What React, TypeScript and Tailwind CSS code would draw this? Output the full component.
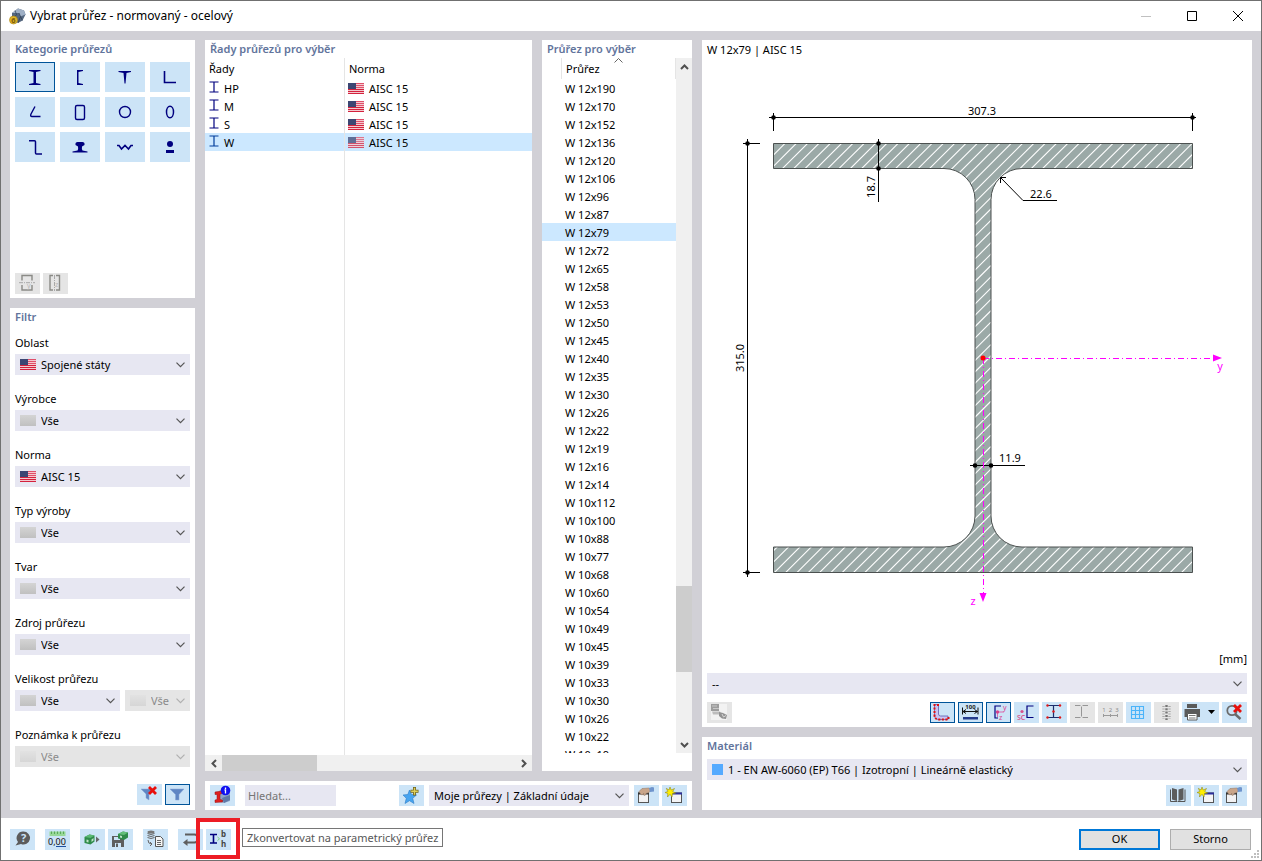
import { useState } from "react";
import type { ReactNode } from "react";
import clsx from "clsx";

const NAVY = "#00007f";

const SERIES = ["HP", "M", "S", "W"];

const SECTIONS = [
  "W 12x190", "W 12x170", "W 12x152", "W 12x136", "W 12x120", "W 12x106", "W 12x96", "W 12x87",
  "W 12x79", "W 12x72", "W 12x65", "W 12x58", "W 12x53", "W 12x50", "W 12x45", "W 12x40",
  "W 12x35", "W 12x30", "W 12x26", "W 12x22", "W 12x19", "W 12x16", "W 12x14", "W 10x112",
  "W 10x100", "W 10x88", "W 10x77", "W 10x68", "W 10x60", "W 10x54", "W 10x49", "W 10x45",
  "W 10x39", "W 10x33", "W 10x30", "W 10x26", "W 10x22", "W 10x19",
];

// Section category glyphs, drawn on a 20x20 grid
const CATEGORIES: { name: string; icon: ReactNode }[] = [
  { name: "I", icon: <path d="M4 3h11.500v1l-4.500 1v11l4.500 1v1H4v-1l4.500-1V5L4 4z" fill={NAVY} /> },
  { name: "U", icon: <path d="M7 3h6v1l-4.500 1v11l4.500 1v1H7z" fill={NAVY} /> },
  { name: "T", icon: <path d="M3.500 4h12.500v1l-4.500 1L10.500 16.500h-1L8.500 6l-5-1z" fill={NAVY} /> },
  { name: "L", icon: <path d="M4.500 4v11.500H16" fill="none" stroke={NAVY} strokeWidth="1.600" /> },
  { name: "L otevřený", icon: <path d="M10 4.500 6 12q-1 2.500 1 2.500h8.500" fill="none" stroke={NAVY} strokeWidth="1.400" /> },
  { name: "Obdélník", icon: <rect x="5.500" y="3.500" width="9" height="14" rx="1.500" fill="none" stroke={NAVY} strokeWidth="1.400" /> },
  { name: "Trubka", icon: <circle cx="10" cy="10" r="5.500" fill="none" stroke={NAVY} strokeWidth="1.400" /> },
  { name: "Elipsa", icon: <ellipse cx="10" cy="10" rx="3.500" ry="5.700" fill="none" stroke={NAVY} strokeWidth="1.500" /> },
  { name: "Z", icon: <path d="M4 3.700h5.500q1 0 1 1V16q0 1 1 1H17" fill="none" stroke={NAVY} strokeWidth="1.500" /> },
  { name: "Kolejnice", icon: <path d="M5.500 6.500q0-1.500 2-1.500h5q2 0 2 1.500v1.500l-2.500 1.500q-.5 3 .5 4l5 1v1H2.500v-1l5-1q1-1 .5-4L5.500 8z" fill={NAVY} /> },
  { name: "Trapéz", icon: <path d="M2 8.500h2l2.500 3.500 3.500-3.500 3.500 3.500L16 8.500h2" fill="none" stroke={NAVY} strokeWidth="1.600" /> },
  { name: "Ostatní", icon: <g fill={NAVY}><circle cx="10" cy="7" r="3" /><rect x="6" y="13" width="8" height="3" /></g> },
];

// 45° hatch lines, each one given by the constant x + y
const HATCH = Array.from({ length: 75 }, (_, i) => 917.1 + i * 11.31);

function Flag({ faded }: { faded?: boolean }) {
  return (
    <svg width="16" height="11" viewBox="0 0 16 11" shapeRendering="crispEdges" className={clsx("shrink-0", faded && "opacity-75")} aria-hidden>
      <rect width="16" height="11" fill="#f3c9cf" />
      {[0, 2, 4, 6, 8, 10].map((y) => (
        <rect key={y} y={y} width="16" height="1" fill={y > 5 ? "#d4213d" : "#e0506a"} />
      ))}
      <rect width="8" height="6" fill="#3c4673" />
    </svg>
  );
}

function Blank({ disabled }: { disabled?: boolean }) {
  return (
    <span
      className={clsx(
        "block h-[11px] w-4 bg-linear-to-b",
        disabled ? "from-[#e2e2e2] to-[#d6d6d6]" : "from-[#d4d4d4] to-[#c0c0c0]"
      )}
    />
  );
}

function Chevron({ light }: { light?: boolean }) {
  return (
    <svg width="9" height="6" viewBox="0 0 9 6" aria-hidden>
      <path d="M.5.700 4.500 4.700 8.500.700" fill="none" stroke={light ? "#b0b0b0" : "#555"} strokeWidth="1.200" />
    </svg>
  );
}

function Combo({ label, id, value, icon, disabled, className }: {
  label?: string;
  id: string;
  value: string;
  icon?: ReactNode;
  disabled?: boolean;
  className?: string;
}) {
  return (
    <div className={clsx("relative min-w-0", className)}>
      <select
        id={id}
        aria-label={label}
        disabled={disabled}
        className={clsx(
          "block h-[21px] w-full appearance-none pt-[2px] pr-4 outline-none",
          icon ? "pl-[26px]" : "pl-[5px]",
          disabled ? "bg-[#e5e5e5] text-[#8a8a8a] opacity-100" : "bg-[#e7e7f2] text-black"
        )}
      >
        <option>{value}</option>
      </select>
      {icon && <span className="pointer-events-none absolute top-[5px] left-[5px]">{icon}</span>}
      <span className="pointer-events-none absolute top-2 right-[5px]">
        <Chevron light={disabled} />
      </span>
    </div>
  );
}

function Field({ label, htmlFor, children }: { label: string; htmlFor: string; children: ReactNode }) {
  return (
    <div className="flex flex-col gap-[3px]">
      <label htmlFor={htmlFor} className="h-4 leading-4">{label}</label>
      {children}
    </div>
  );
}

// Tool icons share a 25x21 grid, the same size as the button
function Tool({ title, active, disabled, children }: {
  title: string;
  active?: boolean;
  disabled?: boolean;
  children: ReactNode;
}) {
  return (
    <button
      type="button"
      aria-label={title}
      disabled={disabled}
      className={clsx(
        "h-[21px] w-[25px] shrink-0",
        disabled ? "bg-[#e5e5e5]" : "bg-[#cce4f7]",
        active && "ring-1 ring-[#005499] ring-inset"
      )}
    >
      <svg width="25" height="21" viewBox="0 0 25 21" fill="none" className="block">{children}</svg>
    </button>
  );
}

function Panel({ title, className, children }: { title: string; className?: string; children: ReactNode }) {
  return (
    <section className={clsx("flex flex-col bg-white", className)}>
      <h2 className="h-[18px] shrink-0 px-[5px] leading-[18px] font-semibold text-[#62749c]">{title}</h2>
      {children}
    </section>
  );
}

function ManageIcon() {
  return (
    <>
      <rect x="4.500" y="8" width="10" height="9.500" fill="#f2f2f4" stroke="#555" />
      <path d="M4 8.500h11" stroke="#333" strokeWidth="2" />
      <path d="M5 6.500 8 3.500l7-.5 2 1.500-2 3-3 1-1 2-1.500-.5.500-1.500-2 1.500-1.500-1z" fill="#c9a58a" stroke="#8d7260" strokeWidth=".5" />
      <path d="m15 3 3-1 2 .5v4l-4 .500z" fill="#6f94cc" />
    </>
  );
}

function NewIcon() {
  return (
    <>
      <rect x="9.500" y="8" width="10" height="9.500" fill="#f4f4f6" stroke="#555" />
      <path d="M9 8.500h11" stroke="#2b2f9c" strokeWidth="2" />
      <path d="m8 2 1.200 3 3.300-1.500-1.800 3 3 1.500-3.200.500L10 12l-2-2.700L5.500 12l.3-3.500L3 7.500l2.800-1L4.300 3.300 7 5z" fill="#ffee00" stroke="#8f8a20" strokeWidth=".6" />
    </>
  );
}

function RedCross() {
  return <path d="m12 3 7 7M19 3l-7 7" stroke="#e8100c" strokeWidth="2.800" />;
}

function Funnel({ d }: { d: string }) {
  return <path d={d} fill="#5f86c4" stroke="#88a6d6" strokeWidth=".5" />;
}

function AppIcon() {
  return (
    <svg width="17" height="17" viewBox="0 0 17 17" aria-hidden>
      <path d="m3 5 6-4.500 6 2 1.500 4-3 6L9 15 3 11z" fill="#54677f" />
      <path d="m3 5 6-4.500 6 2-5 2.500zM10 5l5-2.500 1.500 4-5 2z" fill="#9fb0c6" />
      <path d="m10 5 1.500 3.500L9 15M11.500 8.500l2 4M6 2.500l1.500 4L5 10" stroke="#2d3b50" strokeWidth=".7" fill="none" />
      <circle cx="4.500" cy="12" r="4" fill="#e0b62c" stroke="#a67f12" strokeWidth=".6" />
      <text x="4.500" y="14.800" fontSize="7.500" fontWeight="700" textAnchor="middle" fill="#7a5a08">6</text>
    </svg>
  );
}

function TitleBar() {
  const button = "flex h-full w-[46px] items-center justify-center";
  return (
    <header className="flex h-[30px] shrink-0 items-center bg-white pl-2">
      <AppIcon />
      <h1 className="ml-1 flex-1 text-[12px]">Vybrat průřez - normovaný - ocelový</h1>
      <button type="button" aria-label="Minimalizovat" className={button} disabled>
        <svg width="10" height="10"><path d="M0 5.500h10" stroke="#c0c0c0" /></svg>
      </button>
      <button type="button" aria-label="Maximalizovat" className={button}>
        <svg width="10" height="10"><path d="M.5.500h9v9h-9z" fill="none" stroke="#000" /></svg>
      </button>
      <button type="button" aria-label="Zavřít" className={button}>
        <svg width="10" height="10"><path d="m0 0 10 10M10 0 0 10" stroke="#000" /></svg>
      </button>
    </header>
  );
}

function Categories() {
  const [selected, setSelected] = useState("I");
  return (
    <Panel title="Kategorie průřezů" className="h-[258px]">
      <div className="mt-1 grid grid-cols-4 gap-[5px] px-[5px]">
        {CATEGORIES.map(({ name, icon }) => (
          <button
            key={name}
            type="button"
            aria-label={name}
            onClick={() => setSelected(name)}
            className={clsx(
              "flex h-[30px] items-center justify-center bg-[#cce4f7]",
              selected === name && "ring-1 ring-[#005499] ring-inset"
            )}
          >
            <svg width="20" height="20" viewBox="0 0 20 20">{icon}</svg>
          </button>
        ))}
      </div>
      <div className="mt-auto flex gap-[3px] px-[5px] pb-1">
        <Tool title="Zrcadlit podle y" disabled>
          <path d="M9 2.500H7v5M15 2.500h2v5M9 2.500h6M7 12v5h10v-5" stroke="#8a8a86" strokeWidth="1.400" />
          <path d="M4 9.700h16" stroke="#a8a8a8" strokeDasharray="4 1 1 1" />
          <text x="12" y="15" fontSize="7" fill="#b8b8b8">y</text>
        </Tool>
        <Tool title="Zrcadlit podle z" disabled>
          <path d="M10 2.500H7v14.500h3M13 2.500h3.500v14.500H13" stroke="#8a8a86" strokeWidth="1.400" />
          <path d="M11.500 2v16" stroke="#a8a8a8" strokeDasharray="4 1 1 1" />
          <text x="12" y="14" fontSize="7" fill="#b8b8b8">z</text>
        </Tool>
      </div>
    </Panel>
  );
}

function Filter() {
  return (
    <Panel title="Filtr" className="flex-1">
      <div className="mt-[9px] flex flex-col gap-4 px-[5px]">
        <Field label="Oblast" htmlFor="oblast"><Combo id="oblast" value="Spojené státy" icon={<Flag />} /></Field>
        <Field label="Výrobce" htmlFor="vyrobce"><Combo id="vyrobce" value="Vše" icon={<Blank />} /></Field>
        <Field label="Norma" htmlFor="norma"><Combo id="norma" value="AISC 15" icon={<Flag />} /></Field>
        <Field label="Typ výroby" htmlFor="typ"><Combo id="typ" value="Vše" icon={<Blank />} /></Field>
        <Field label="Tvar" htmlFor="tvar"><Combo id="tvar" value="Vše" icon={<Blank />} /></Field>
        <Field label="Zdroj průřezu" htmlFor="zdroj"><Combo id="zdroj" value="Vše" icon={<Blank />} /></Field>
        <Field label="Velikost průřezu" htmlFor="velikost">
          <div className="flex gap-[5px]">
            <Combo id="velikost" value="Vše" icon={<Blank />} className="flex-1" />
            <Combo id="velikost2" label="Velikost průřezu 2" value="Vše" icon={<Blank disabled />} disabled className="w-[65px]" />
          </div>
        </Field>
        <Field label="Poznámka k průřezu" htmlFor="poznamka">
          <Combo id="poznamka" value="Vše" icon={<Blank disabled />} disabled />
        </Field>
      </div>
      <div className="mt-auto flex justify-end gap-[3px] p-[5px]">
        <Tool title="Zrušit filtr">
          <Funnel d="M4 5h12l-4 5v6l-3-2v-4z" />
          <RedCross />
        </Tool>
        <Tool title="Filtr" active><Funnel d="M5 5h14l-5 5.500v5.500h-3.500v-5.500z" /></Tool>
      </div>
    </Panel>
  );
}

function SeriesTable() {
  const [selected, setSelected] = useState("W");
  return (
    <Panel title="Řady průřezů pro výběr" className="min-h-0 min-w-0 flex-1">
      <div className="min-h-0 flex-1">
        <table className="h-full w-full table-fixed border-separate border-spacing-0 text-left">
          <thead>
            <tr className="h-[21px]">
              <th className="w-[140px] border-r border-[#e5e5e5] px-1 pt-[2px] pb-0 font-normal">Řady</th>
              <th className="px-1 pt-[2px] pb-0 font-normal">Norma</th>
            </tr>
          </thead>
          <tbody>
            {SERIES.map((name) => (
              <tr
                key={name}
                onClick={() => setSelected(name)}
                className={clsx("h-[18px]", selected === name && "bg-[#cce8ff]")}
              >
                <td className="border-r border-[#e5e5e5] px-1 py-0">
                  <div className="flex h-[18px] items-center gap-[5px]">
                    <svg width="10" height="14" viewBox="0 0 10 14" className="shrink-0" aria-hidden>
                      <path d="M.5 1h9M.5 11h9M5 1v10" stroke={selected === name ? "#003c9c" : NAVY} strokeWidth="1.200" />
                    </svg>
                    <span className="pt-[2px]">{name}</span>
                  </div>
                </td>
                <td className="px-[3px] py-0">
                  <div className="flex h-[18px] items-center gap-[5px]">
                    <Flag faded={selected === name} />
                    <span className="pt-[2px]">AISC 15</span>
                  </div>
                </td>
              </tr>
            ))}
            <tr>
              <td className="border-r border-[#e5e5e5]" />
              <td />
            </tr>
          </tbody>
        </table>
      </div>
      <div className="flex h-4 shrink-0 bg-[#f0f0f0]">
        <button type="button" aria-label="Posunout vlevo" className="flex w-[17px] items-center justify-center">
          <svg width="6" height="9"><path d="M5 1 1.500 4.500 5 8" fill="none" stroke="#505050" strokeWidth="2" /></svg>
        </button>
        <div className="flex-[95] bg-[#cdcdcd]" />
        <div className="flex-[198]" />
        <button type="button" aria-label="Posunout vpravo" className="flex w-[17px] items-center justify-center">
          <svg width="6" height="9"><path d="M1 1l3.500 3.500L1 8" fill="none" stroke="#505050" strokeWidth="2" /></svg>
        </button>
      </div>
    </Panel>
  );
}

function SectionList({ selected, onSelect }: { selected: string; onSelect: (name: string) => void }) {
  return (
    <Panel title="Průřez pro výběr" className="min-h-0 w-[150px] shrink-0 pb-[18px]">
      <div className="flex min-h-0 flex-1">
        <div className="relative min-w-0 flex-1 overflow-hidden">
          <svg width="9" height="5" className="absolute top-0 left-[72px]" aria-hidden>
            <path d="M.5 4.500l4-4 4 4" fill="none" stroke="#666" />
          </svg>
          <table className="w-full table-fixed border-separate border-spacing-0 text-left">
            <thead>
              <tr className="h-[21px]">
                <th className="w-5 border-r border-[#e5e5e5] p-0" />
                <th className="border-r border-[#e5e5e5] px-1 pt-[2px] pb-0 font-normal">Průřez</th>
              </tr>
            </thead>
            <tbody>
              {SECTIONS.map((name) => (
                <tr
                  key={name}
                  onClick={() => onSelect(name)}
                  className={clsx("h-[18px] leading-[18px]", selected === name && "bg-[#cce8ff]")}
                >
                  <td className="p-0" />
                  <td className="px-[3px] py-0 whitespace-nowrap">
                    <div className="h-[18px] pt-px">{name}</div>
                  </td>
                </tr>
              ))}
            </tbody>
          </table>
        </div>
        <div className="flex w-4 shrink-0 flex-col bg-[#f0f0f0]">
          <button type="button" aria-label="Posunout nahoru" className="flex h-[17px] items-center justify-center">
            <svg width="9" height="6"><path d="M1 5l3.500-3.500L8 5" fill="none" stroke="#505050" strokeWidth="2" /></svg>
          </button>
          <div className="flex-[512]" />
          <div className="flex-[86] bg-[#cdcdcd]" />
          <div className="flex-[64]" />
          <button type="button" aria-label="Posunout dolů" className="flex h-[17px] items-center justify-center">
            <svg width="9" height="6"><path d="M1 1l3.500 3.500L8 1" fill="none" stroke="#505050" strokeWidth="2" /></svg>
          </button>
        </div>
      </div>
    </Panel>
  );
}

function SearchBar() {
  return (
    <div className="flex h-[29px] shrink-0 items-center bg-white px-[5px]">
      <Tool title="Informace o průřezu">
        <path d="m9 6 5-2 6 3v9l-6 2-4-1z" fill="#8ea4c8" />
        <path d="m12 13 8-3v5l-6 3z" fill="#5f79a8" />
        <path d="m5 7 7-1v2.500l-2 .5v5.500l2.500.5V17L5 17.500V15l2-.5V9.500L5 9.500z" fill="#e02020" stroke="#901010" strokeWidth=".5" />
        <circle cx="15.500" cy="5.500" r="4.800" fill="#1010f0" />
        <path d="M15.500 2.500v1.500M14.500 5h1v3.500" stroke="#fff" strokeWidth="1.300" />
      </Tool>
      <input
        type="search"
        aria-label="Hledat"
        placeholder="Hledat..."
        className="ml-[10px] h-[21px] w-[91px] bg-[#e7e7f2] px-[3px] outline-none placeholder:text-[#757575]"
      />
      <div className="ml-auto flex">
        <Tool title="Přidat k oblíbeným">
          <path d="m10.500 5 2 4.500 5 .5-3.800 3.300L15 18.500l-4.500-2.800L6 18.500l1.300-5.200L4 10l4.800-.5z" fill="#47a4f0" stroke="#2d7cc6" strokeWidth=".6" />
          <path d="M15.500 2v8.500M11.500 6.200h8" stroke="#6e6420" strokeWidth="3" />
          <path d="M15.500 2.800v7M12.200 6.200h6.600" stroke="#dfcf58" strokeWidth="1.400" />
        </Tool>
        <Combo id="oblibene" label="Oblíbené" value="Moje průřezy | Základní údaje" className="mx-[5px] w-[200px]" />
        <div className="flex gap-[3px]">
          <Tool title="Spravovat průřezy"><ManageIcon /></Tool>
          <Tool title="Nová skupina"><NewIcon /></Tool>
        </div>
      </div>
    </div>
  );
}

function SectionDrawing() {
  const outline =
    "M773.500 143.500H1192.500V168.500H1022A31 31 0 0 0 991 199.500V516A31 31 0 0 0 1022 547H1192.500V572.500H773.500V547H944A31 31 0 0 0 975 516V199.500A31 31 0 0 0 944 168.500H773.500Z";
  return (
    <svg viewBox="702 62 550 588" className="min-h-0 w-full flex-1" fontSize="11" aria-label="Průřez W 12x79">
      <clipPath id="section"><path d={outline} /></clipPath>
      <path d={outline} fill="#9ba9a7" />
      <g clipPath="url(#section)" stroke="#fff" strokeWidth="1.100">
        {HATCH.map((sum) => (
          <path key={sum} d={`M${sum - 140} 140 ${sum - 576} 576`} />
        ))}
      </g>
      <path d={outline} fill="none" stroke="#4c5150" />

      {/* dimension lines */}
      <g stroke="#000" fill="none">
        <path d="M769 117.500H1196M773.500 113V131M1192.500 113V131" />
        <path d="M747.500 139V577M743 143.500H760M743 572.500H760" />
        <path d="M878.500 139V202" />
        <path d="M970 465.500H1025" />
        <path d="M1000.500 177.500 1023 200.500H1057M1000.500 183V177.500H1006" />
      </g>
      <g>
        <circle cx="773.500" cy="117.500" r="2.300" />
        <circle cx="1192.500" cy="117.500" r="2.300" />
        <circle cx="747.500" cy="143.500" r="2.300" />
        <circle cx="747.500" cy="572.500" r="2.300" />
        <circle cx="878.500" cy="143.500" r="2.300" />
        <circle cx="878.500" cy="168.500" r="2.300" />
        <circle cx="975" cy="465.500" r="2.300" />
        <circle cx="991" cy="465.500" r="2.300" />
      </g>
      <g textAnchor="middle">
        <text x="982" y="115">307.3</text>
        <text x="1041" y="198">22.6</text>
        <text x="1010" y="462">11.9</text>
        <text transform="translate(744 358) rotate(-90)">315.0</text>
        <text transform="translate(875 187) rotate(-90)">18.7</text>
      </g>

      {/* principal axes */}
      <g stroke="#f0f" strokeDasharray="6 3 1 3" fill="none">
        <path d="M983 358.500H1213" />
        <path d="M983.500 358V593" />
      </g>
      <g fill="#f0f" textAnchor="middle">
        <path d="M1213 354.500 1222 358 1213 361.500ZM979.500 593H986.500L983 602Z" />
        <text x="1220" y="370">y</text>
        <text x="973" y="605">z</text>
      </g>
      <circle cx="983" cy="358" r="2.500" fill="#f00" />
    </svg>
  );
}

function ViewToolbar() {
  return (
    <div className="mt-2 flex shrink-0 gap-[3px] px-[5px] pb-1">
      <Tool title="Uspořádání" disabled>
        <rect x="4" y="2" width="16" height="16" fill="#f2f2f2" />
        <rect x="4" y="2" width="8" height="7" fill="#9d9d9d" />
        <path d="M5 4h5M6 6.500h6" stroke="#c8c8c8" />
        <path d="M5 9.500h8l1 3H6z" fill="#bcbcbc" />
        <path d="m12 10 4 1 4 2-1 4-4-.5-3-2.500z" fill="#929292" />
        <path d="m15 12 1.500 3 2.500-1.500" stroke="#d8d8d8" />
      </Tool>
      <div className="flex-1" />
      <Tool title="Napěťové body" active>
        <path d="M4.500 2.500H8.500v9.500q0 2 2 2h7.500v3.500H9q-4.500 0-4.500-4.500z" fill="#c9c4f2" stroke="#5c5cb0" strokeWidth=".8" />
        <path d="M9 3H4.500v10q0 4.500 4.500 4.500h9.500v-4" stroke="#e01010" strokeWidth="2" strokeDasharray="2 1.500" />
      </Tool>
      <Tool title="Kóty" active>
        <text x="12.500" y="7" fontSize="6" fontWeight="700" textAnchor="middle" fill="#222">100</text>
        <path d="M4.500 5.500v7M20 5.500v7M5 9.500h15M8 7.500l-3 2 3 2M16.500 7.500l3 2-3 2" stroke="#111" />
        <path d="M5 15h15v2.500H5z" fill="#233a8c" />
      </Tool>
      <Tool title="Hlavní osy" active>
        <path d="M15 4H9v12h3" stroke={NAVY} strokeWidth="1.200" />
        <path d="M11 10h7M11.500 10v5" stroke="#dc6bb0" />
        <circle cx="11.500" cy="10" r="1.700" fill="#d8408c" />
        <text x="17" y="8" fontSize="7" fill="#d8408c">y</text>
        <text x="13" y="18" fontSize="7" fill="#d8408c">z</text>
      </Tool>
      <Tool title="Střed smyku">
        <path d="M19.500 4h-6.500v11.500h6.500" stroke={NAVY} strokeWidth="1.200" />
        <circle cx="8" cy="9.500" r="1.600" fill="#d8508c" />
        <text x="3" y="18" fontSize="7" fontWeight="600" fill="#d8508c">SC</text>
      </Tool>
      <Tool title="Body průřezu">
        <path d="M5 3.500h13.500M5 15.500h13.500M11.500 3.500v12" stroke="#1d2f6c" strokeWidth="1.200" />
        <g fill="#e01818">
          <circle cx="5.500" cy="3.500" r="1.200" /><circle cx="18" cy="3.500" r="1.200" />
          <circle cx="5.500" cy="15.500" r="1.200" /><circle cx="18" cy="15.500" r="1.200" />
          <circle cx="11.500" cy="9.500" r="1.200" />
        </g>
      </Tool>
      <Tool title="Obrys" disabled>
        <path d="M5 3.500h5.500M12.500 3.500H18M5 15.500h5.500M12.500 15.500H18M11.500 4.500v10" stroke="#969696" />
      </Tool>
      <Tool title="Číslování" disabled>
        <text x="12.500" y="10" fontSize="6" textAnchor="middle" fill="#8c8c8c" xmlSpace="preserve">1  2  3</text>
        <path d="M5 13.500h15M5.500 12v3M12.500 12v3M19.500 12v3" stroke="#9a9a9a" />
      </Tool>
      <Tool title="Rastr">
        <path d="M5.500 4.500h12V16.500h-12zM9.500 4.500v12M13.500 4.500v12M5.500 8.500h12M5.500 12.500h12" stroke="#4bb4fa" strokeWidth="1.100" />
      </Tool>
      <Tool title="Hodnoty" disabled>
        <path d="M12.500 3v15" stroke="#777" strokeWidth="2.400" strokeDasharray="2 1.300" />
        <path d="M9.500 4v13M15.500 4v13" stroke="#aaa" strokeWidth="2.400" strokeDasharray="1 1.500" />
      </Tool>
      <button type="button" aria-label="Tisk" className="h-[21px] w-[37px] shrink-0 bg-[#cce4f7]">
        <svg width="37" height="21" viewBox="0 0 37 21" fill="none" className="block">
          <path d="M5 2h10v4H5z" fill="#5a5a5a" />
          <path d="M2.500 7h15.500v8H2.500z" fill="#5a5a5a" />
          <path d="M5.500 11.500h9.500V18H5.500z" fill="#fff" stroke="#5a5a5a" />
          <path d="M7 13.500h6.500M7 16h6.500" stroke="#777" />
          <path d="M26 8h7l-3.500 4z" fill="#000" />
        </svg>
      </button>
      <Tool title="Zobrazit vše">
        <circle cx="10" cy="8.500" r="4.700" stroke="#6a6a6a" strokeWidth="1.800" />
        <path d="m13 12 5.500 5" stroke="#6a6a6a" strokeWidth="2.400" />
        <RedCross />
      </Tool>
    </div>
  );
}

function Material() {
  return (
    <Panel title="Materiál" className="h-[73px] shrink-0">
      <div className="mt-1 px-[5px]">
        <Combo
          id="material"
          label="Materiál"
          value="1 - EN AW-6060 (EP) T66 | Izotropní | Lineárně elastický"
          icon={<span className="block size-[11px] bg-[#55aaff]" />}
          className="[&_select]:pl-[21px]"
        />
      </div>
      <div className="mt-[5px] flex justify-end gap-[3px] px-[5px]">
        <Tool title="Databáze materiálů">
          <path d="M4.500 4.500v12h6.500l.5.500.5-.5h7v-12" stroke="#555" />
          <path d="m6 3 5 1.500v11.500L6 14.500zM17.500 3l-5 1.500v11.500l5-1.500z" fill="#5c5c5c" />
        </Tool>
        <Tool title="Nový materiál"><NewIcon /></Tool>
        <Tool title="Upravit materiál"><ManageIcon /></Tool>
      </div>
    </Panel>
  );
}

function Footer() {
  return (
    <footer className="relative flex h-[42px] shrink-0 items-center bg-white pr-[10px] pl-[9px]">
      <div className="flex gap-[10px]">
        <Tool title="Nápověda">
          <path d="M13.500 2.500a6.500 6.500 0 1 1-2.500 12.500L5.500 16.500 8 13a6.500 6.500 0 0 1 5.500-10.500z" fill="#5c5c5c" />
          <text x="13.500" y="13" fontSize="11" fontWeight="700" textAnchor="middle" fill="#cce4f7">?</text>
        </Tool>
        <Tool title="Jednotky">
          <path d="M4.500 2.500h16V7h-16z" fill="#97d897" />
          <path d="M6.500 2.500V5M9.500 2.500V5M12.500 2.500V5M15.500 2.500V5M18.500 2.500V5" stroke="#5aa85a" />
          <text x="12" y="16" fontSize="9" textAnchor="middle" fill="#111">0,00</text>
          <path d="M11 17.500h10" stroke="#1d4fa0" />
        </Tool>
        <div className="flex gap-[3px]">
          <Tool title="Import">
            <path d="m4.500 8 5-2.500 5 1v6l-4 3-6-1.500z" fill="#2e8b4a" />
            <path d="m4.500 8 5-2.500 5 1-4 2.500z" fill="#5ab873" />
            <path d="m6.500 10.500 2 .5v2.500l-2-.5zM11.500 10.500l2-1.500v2.500l-2 1.500z" fill="#bfe3c8" />
            <path d="m16 7.500 3.500 3-3.500 3z" fill="#666" />
          </Tool>
          <Tool title="Uložit">
            <path d="M4 7h10l2 2v9H4z" fill="#5e5e5e" />
            <path d="M6 8h6v3H6zM7 14h6v4H7z" fill="#cce4f7" />
            <path d="M8 14.500h2V18H8z" fill="#5e5e5e" />
            <path d="m10 5 5-2.500 5 1v5l-4 2.500-6-1.500z" fill="#2e8b4a" />
            <path d="m10 5 5-2.500 5 1L16 6z" fill="#62bf7a" />
            <path d="m12 6.500 2 .5v2l-2-.5z" fill="#bfe3c8" />
          </Tool>
        </div>
        <Tool title="Kopírovat z databáze">
          <ellipse cx="8" cy="3" rx="3.500" ry="1.500" fill="#777" />
          <path d="M4.500 4.500q3.500 2 7 0M4.500 6.500q3.500 2 7 0M4.500 8.500q3.500 2 7 0M5 11q0 4 3.500 4M7 13l2 2-2 2" stroke="#666" />
          <path d="M12.500 7.500h5l2.500 2.500v7.500h-7.500z" fill="#f6f6f6" stroke="#555" />
          <path d="M14 11.500h4M14 13.500h4M14 15.500h4" stroke="#666" />
        </Tool>
        <div className="flex gap-[3px]">
          <Tool title="Zpět">
            <path d="M7 5.500h9.500q3 0 3 4t-3 4H8" stroke="#5e5e5e" strokeWidth="2" />
            <path d="M9.500 10v7L5 13.500z" fill="#5e5e5e" />
          </Tool>
          <div className="relative flex">
            <Tool title="Zkonvertovat na parametrický průřez">
              <path d="M4 5.500h7M4 14h7M7.500 5.500V14" stroke={NAVY} strokeWidth="1.600" />
              <path d="m11.500 8 2 1.800-2 1.800" stroke="#7ccf7c" />
              <text x="15" y="8" fontSize="8" fontWeight="700" fill="#444">b</text>
              <text x="15" y="18" fontSize="8" fontWeight="700" fill="#444">h</text>
            </Tool>
            <div className="pointer-events-none absolute -top-[11px] -left-[10px] h-[41px] w-[44px] border-4 border-[#ed1c24]" />
            <div
              role="tooltip"
              className="absolute -top-px left-[36px] h-[19px] border border-[#767676] bg-white px-1 leading-[17px] whitespace-nowrap text-[#575757]"
            >
              Zkonvertovat na parametrický průřez
            </div>
          </div>
        </div>
      </div>
      <div className="ml-auto flex gap-[10px]">
        <button type="button" className="h-[21px] w-[81px] border-2 border-[#0078d7] bg-[#e1e1e1]">OK</button>
        <button type="button" className="h-[21px] w-[81px] border border-[#adadad] bg-[#e1e1e1]">Storno</button>
      </div>
      <svg width="8" height="8" className="absolute right-[2px] bottom-[2px]" fill="#bfbfbf" aria-hidden>
        <path d="M6 0h2v2H6zM6 3h2v2H6zM3 3h2v2H3zM0 6h2v2H0zM3 6h2v2H3zM6 6h2v2H6z" />
      </svg>
    </footer>
  );
}

export default function App() {
  const [section, setSection] = useState("W 12x79");

  return (
    <div className="flex h-screen flex-col overflow-hidden border border-[#707070] bg-white font-['Noto_Sans','Open_Sans',sans-serif] text-[11px] text-black">
      <TitleBar />
      <main className="grid min-h-0 flex-1 grid-cols-[185px_minmax(0,487fr)_minmax(0,550fr)] grid-rows-[minmax(0,1fr)] gap-[10px] bg-[#d1d0d6] px-[9px] pt-[9px] pb-2">
        <div className="flex min-h-0 flex-col gap-[10px]">
          <Categories />
          <Filter />
        </div>
        <div className="flex min-h-0 flex-col gap-[10px]">
          <div className="flex min-h-0 flex-1 gap-[10px]">
            <SeriesTable />
            <SectionList selected={section} onSelect={setSection} />
          </div>
          <SearchBar />
        </div>
        <div className="flex min-h-0 flex-col gap-[10px]">
          <section className="flex min-h-0 flex-1 flex-col bg-white">
            <h2 className="h-[22px] shrink-0 px-[5px] leading-5">{section} | AISC 15</h2>
            <SectionDrawing />
            <p className="mb-[5px] h-[18px] shrink-0 px-[5px] text-right leading-[18px]">[mm]</p>
            <Combo id="popis" label="Zobrazení" value="--" className="mx-[5px] shrink-0" />
            <ViewToolbar />
          </section>
          <Material />
        </div>
      </main>
      <Footer />
    </div>
  );
}
